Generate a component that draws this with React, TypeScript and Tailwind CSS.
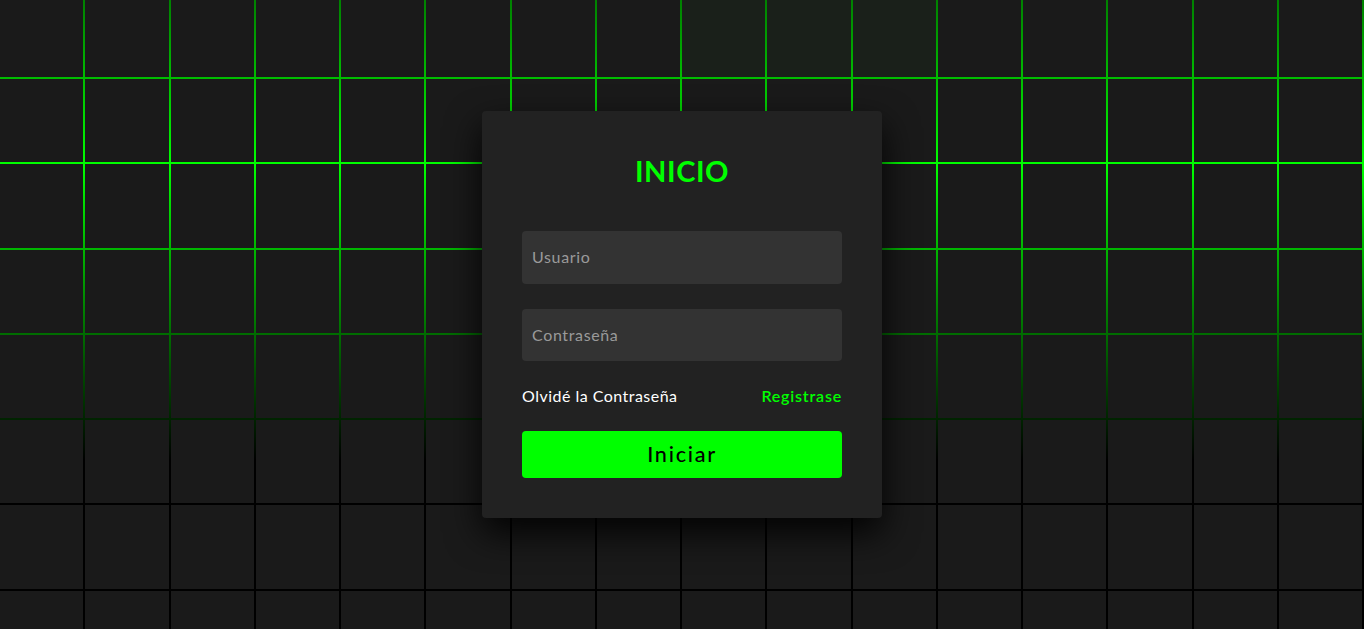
import React from "react";

const COLS = 16;
const ROWS = 9;
// top row cells that are still fading out from a hover
const lit = [8, 9, 10];

export default function App() {
  const cells = Array.from({ length: COLS * ROWS }, (_, i) => i);

  return (
    <div
      className="relative h-screen w-full overflow-hidden bg-black flex items-center justify-center"
      style={{ fontFamily: "Lato, 'Open Sans', sans-serif" }}
    >
      <div className="absolute inset-0 overflow-hidden">
        <div className="absolute inset-0 bg-[linear-gradient(to_bottom,#000_-170px,#0f0_165px,#000_460px)]" />
        <div className="relative flex flex-wrap gap-[2px] mt-[-6.25px]">
          {cells.map((i) => (
            <span
              key={i}
              className={
                "block w-[calc(6.25vw-2px)] h-[calc(6.25vw-2px)] " +
                (lit.includes(i) ? "bg-[#1a201a]" : "bg-[#1a1a1a]")
              }
            />
          ))}
        </div>
      </div>

      {/* sign in card */}
      <div className="relative z-10 w-[400px] bg-[#222] rounded-[4px] p-10 shadow-[0_15px_35px_rgba(0,0,0,0.9)]">
        <div className="flex flex-col items-center gap-10">
          <h2 className="text-[29px] leading-[40px] font-bold uppercase tracking-[0.02em] text-[#0f0]">Inicio</h2>
          <form className="w-full flex flex-col gap-[25px]" onSubmit={(e) => e.preventDefault()}>
            <input
              type="text"
              placeholder="Usuario"
              className="w-full h-[53px] px-[10px] pb-[2px] rounded-[4px] bg-[#333] text-white text-base tracking-[0.04em] outline-none placeholder:text-[#9a9a9a]"
            />
            <input
              type="password"
              placeholder="Contraseña"
              className="w-full h-[52px] px-[10px] pb-[2px] rounded-[4px] bg-[#333] text-white text-base tracking-[0.04em] outline-none placeholder:text-[#9a9a9a]"
            />
            <div className="flex justify-between items-center h-5 text-base">
              <a href="#" className="text-white tracking-[0.03em]">Olvidé la Contraseña</a>
              <a href="#" className="text-[#0f0] font-semibold tracking-[0.05em]">Registrase</a>
            </div>
            <button
              type="submit"
              className="w-full h-[47px] rounded-[4px] bg-[#0f0] text-black text-[21.6px] tracking-[0.08em] font-medium"
            >
              Iniciar
            </button>
          </form>
        </div>
      </div>
    </div>
  );
}
